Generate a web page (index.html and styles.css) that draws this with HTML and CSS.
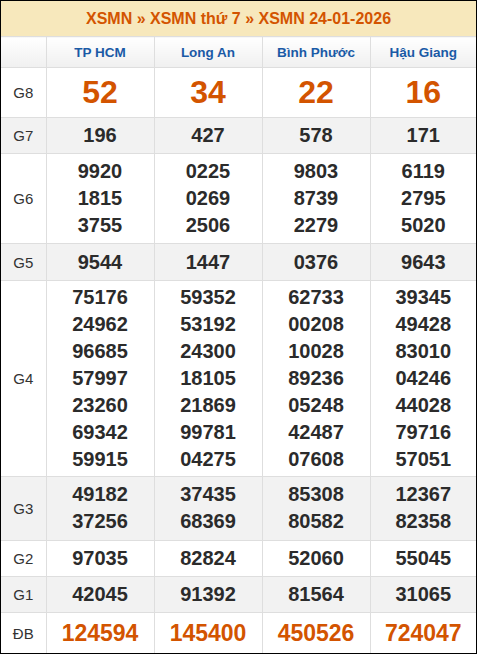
FILE: index.html
```html
<!DOCTYPE html>
<html lang="vi">
<head>
<meta charset="utf-8">
<link rel="stylesheet" href="styles.css">
</head>
<body>
<div class="board">
<table class="kq">
<colgroup><col class="c-label"><col class="c-prov"><col class="c-prov"><col class="c-prov"><col class="c-last"></colgroup>
<thead>
<tr class="title-row"><th colspan="5">XSMN » XSMN thứ 7 » XSMN 24-01-2026</th></tr>
<tr class="prov-row"><th></th><th>TP HCM</th><th>Long An</th><th>Bình Phước</th><th>Hậu Giang</th></tr>
</thead>
<tbody>
<tr class="g8"><td class="lbl">G8</td><td>52</td><td>34</td><td>22</td><td>16</td></tr>
<tr class="alt"><td class="lbl">G7</td><td>196</td><td>427</td><td>578</td><td>171</td></tr>
<tr class="g6"><td class="lbl">G6</td><td>9920<br>1815<br>3755</td><td>0225<br>0269<br>2506</td><td>9803<br>8739<br>2279</td><td>6119<br>2795<br>5020</td></tr>
<tr class="alt g5"><td class="lbl">G5</td><td>9544</td><td>1447</td><td>0376</td><td>9643</td></tr>
<tr class="g4"><td class="lbl">G4</td><td>75176<br>24962<br>96685<br>57997<br>23260<br>69342<br>59915</td><td>59352<br>53192<br>24300<br>18105<br>21869<br>99781<br>04275</td><td>62733<br>00208<br>10028<br>89236<br>05248<br>42487<br>07608</td><td>39345<br>49428<br>83010<br>04246<br>44028<br>79716<br>57051</td></tr>
<tr class="alt g3"><td class="lbl">G3</td><td>49182<br>37256</td><td>37435<br>68369</td><td>85308<br>80582</td><td>12367<br>82358</td></tr>
<tr><td class="lbl">G2</td><td>97035</td><td>82824</td><td>52060</td><td>55045</td></tr>
<tr class="alt"><td class="lbl">G1</td><td>42045</td><td>91392</td><td>81564</td><td>31065</td></tr>
<tr class="db"><td class="lbl">ĐB</td><td>124594</td><td>145400</td><td>450526</td><td>724047</td></tr>
</tbody>
</table>
</div>
</body>
</html>
```

FILE: styles.css
```css
html, body {
  margin: 0;
  padding: 0;
  background: #fff;
}
.board {
  width: 475px;
  border: 1px solid #000;
  font-family: "Liberation Sans", Arial, sans-serif;
}
.kq {
  width: 100%;
  border-collapse: collapse;
  border-style: hidden;
  table-layout: fixed;
}
.c-label { width: 45px; }
.c-prov { width: 108px; }
.c-last { width: 106px; }
.kq th, .kq td {
  border: 1px solid #dedede;
  text-align: center;
  padding: 0;
}
.title-row th {
  background: #f7e8bc;
  color: #d35400;
  font-size: 16px;
  font-weight: bold;
  height: 35px;
}
.prov-row th {
  background: linear-gradient(#ffffff, #f0f0f0);
  color: #1a5aa6;
  font-size: 13.5px;
  font-weight: bold;
  height: 30px;
}
.kq td {
  color: #2b2b2b;
  font-size: 20px;
  font-weight: bold;
  line-height: 27px;
  padding: 4px 0;
}
.kq td.lbl {
  font-size: 15px;
  font-weight: normal;
  color: #333;
}
.alt td { background: #f2f2f2; }
.g8 td {
  color: #d35400;
  font-size: 32px;
  height: 49px;
  padding: 0;
}
.g5 td { height: 28px; }
.g4 td { padding: 3px 0; }
.g3 td { padding: 4px 0 5px; }
.db td {
  color: #d35400;
  font-size: 23px;
  height: 32px;
}
```
